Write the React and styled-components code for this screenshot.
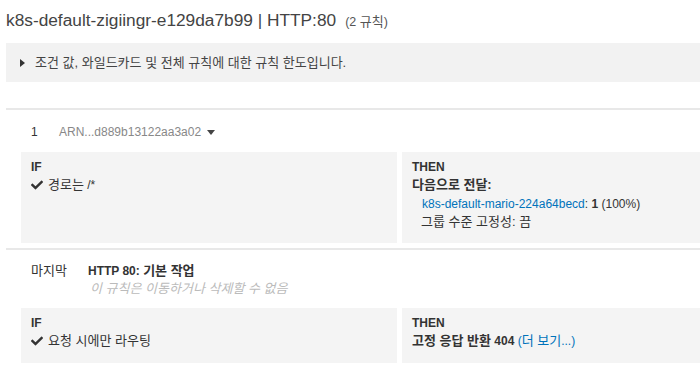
import React from "react";
import styled, { createGlobalStyle } from "styled-components";
import { FaCheck } from "react-icons/fa";

const GlobalStyle = createGlobalStyle`
  body {
    margin: 0;
    background: #fff;
    font-family: "Liberation Sans", Arial, "Noto Sans CJK KR", sans-serif;
    color: #444;
  }
`;

const Page = styled.div`
  width: 700px;
  height: 376px;
  overflow: hidden;
  padding-left: 6px;
  box-sizing: border-box;
`;

// Hangul in the original renders a touch larger than the Latin text
const Ko = styled.span`
  font-size: 13px;
`;

const Title = styled.div`
  margin-top: 8px;
  height: 24px;
  line-height: 24px;
  font-size: 17.3px;
  color: #444;
  white-space: nowrap;
`;

const Count = styled.span`
  font-size: 12.5px;
  color: #555;
  margin-left: 9px;
`;

const InfoBox = styled.div`
  margin-top: 11px;
  background: #f2f2f2;
  padding: 11px 0 11px 14px;
  display: flex;
  align-items: center;
  gap: 10px;
  font-size: 12px;
  line-height: 17px;
  color: #444;
`;

const Triangle = styled.span`
  width: 0;
  height: 0;
  border-top: 4px solid transparent;
  border-bottom: 4px solid transparent;
  border-left: 5px solid #333;
`;

const Divider = styled.div`
  height: 2px;
  background: #e8e8e8;
  margin-top: ${(p) => p.$top}px;
`;

const RuleRow = styled.div`
  display: flex;
  align-items: flex-start;
  margin-top: ${(p) => p.$top}px;
  padding-left: 25px;
  font-size: 12px;
  line-height: 18px;
`;

const RuleNo = styled.div`
  width: ${(p) => p.$w}px;
  color: #333;
`;

const Arn = styled.span`
  color: #888;
  display: flex;
  align-items: center;
  gap: 6px;
`;

const Caret = styled.span`
  width: 0;
  height: 0;
  border-left: 4px solid transparent;
  border-right: 4px solid transparent;
  border-top: 5px solid #444;
`;

const RuleInfo = styled.div`
  display: flex;
  flex-direction: column;
`;

const RuleName = styled.div`
  font-weight: bold;
  color: #333;
`;

const Locked = styled.div`
  font-style: italic;
  color: #bbb;
  padding-left: 2px;
`;

const Cond = styled.div`
  display: grid;
  grid-template-columns: 376px 1fr;
  gap: 5px;
  margin-top: ${(p) => p.$top}px;
  margin-left: 15px;
`;

const Card = styled.div`
  background: #f4f4f4;
  padding: 7px 10px ${(p) => p.$bottom}px;
  font-size: 12px;
  color: #333;
`;

const Head = styled.div`
  font-weight: bold;
  line-height: 17px;
  color: #333;
`;

const Line = styled.div`
  line-height: 18.5px;
  display: flex;
  align-items: center;
  gap: 4px;
  white-space: nowrap;
  padding-left: ${(p) => p.$indent || 0}px;
  font-weight: ${(p) => (p.$bold ? "bold" : "normal")};
`;

const Link = styled.span`
  color: #0073bb;
  font-weight: normal;
`;

const Check = styled(FaCheck)`
  width: 12px;
  height: 12px;
  color: #333;
  margin-right: 1px;
`;

export default function App() {
  return (
    <Page>
      <GlobalStyle />
      <Title>
        k8s-default-zigiingr-e129da7b99 | HTTP:80
        <Count>
          (2 <Ko>규칙</Ko>)
        </Count>
      </Title>
      <InfoBox>
        <Triangle />
        <Ko>조건 값, 와일드카드 및 전체 규칙에 대한 규칙 한도입니다.</Ko>
      </InfoBox>
      <Divider $top={26} />

      <RuleRow $top={13}>
        <RuleNo $w={28}>1</RuleNo>
        <Arn>
          ARN...d889b13122aa3a02
          <Caret />
        </Arn>
      </RuleRow>
      <Cond $top={11}>
        <Card $bottom={11}>
          <Head>IF</Head>
          <Line>
            <Check />
            <span>
              <Ko>경로는</Ko> /*
            </span>
          </Line>
        </Card>
        <Card $bottom={11}>
          <Head>THEN</Head>
          <Line $bold>
            <Ko>다음으로 전달:</Ko>
          </Line>
          <Line $indent={10}>
            <span>
              <Link>k8s-default-mario-224a64becd</Link>: <b>1</b> (100%)
            </span>
          </Line>
          <Line $indent={9}>
            <Ko>그룹 수준 고정성: 끔</Ko>
          </Line>
        </Card>
      </Cond>
      <Divider $top={5} />

      <RuleRow $top={12}>
        <RuleNo $w={57}>
          <Ko>마지막</Ko>
        </RuleNo>
        <RuleInfo>
          <RuleName>
            HTTP 80: <Ko>기본 작업</Ko>
          </RuleName>
          <Locked>
            <Ko>이 규칙은 이동하거나 삭제할 수 없음</Ko>
          </Locked>
        </RuleInfo>
      </RuleRow>
      <Cond $top={10}>
        <Card $bottom={13}>
          <Head>IF</Head>
          <Line>
            <Check />
            <Ko>요청 시에만 라우팅</Ko>
          </Line>
        </Card>
        <Card $bottom={13}>
          <Head>THEN</Head>
          <Line $bold>
            <span>
              <Ko>고정 응답 반환</Ko> 404{" "}
              <Link>
                (<Ko>더 보기</Ko>...)
              </Link>
            </span>
          </Line>
        </Card>
      </Cond>
    </Page>
  );
}
